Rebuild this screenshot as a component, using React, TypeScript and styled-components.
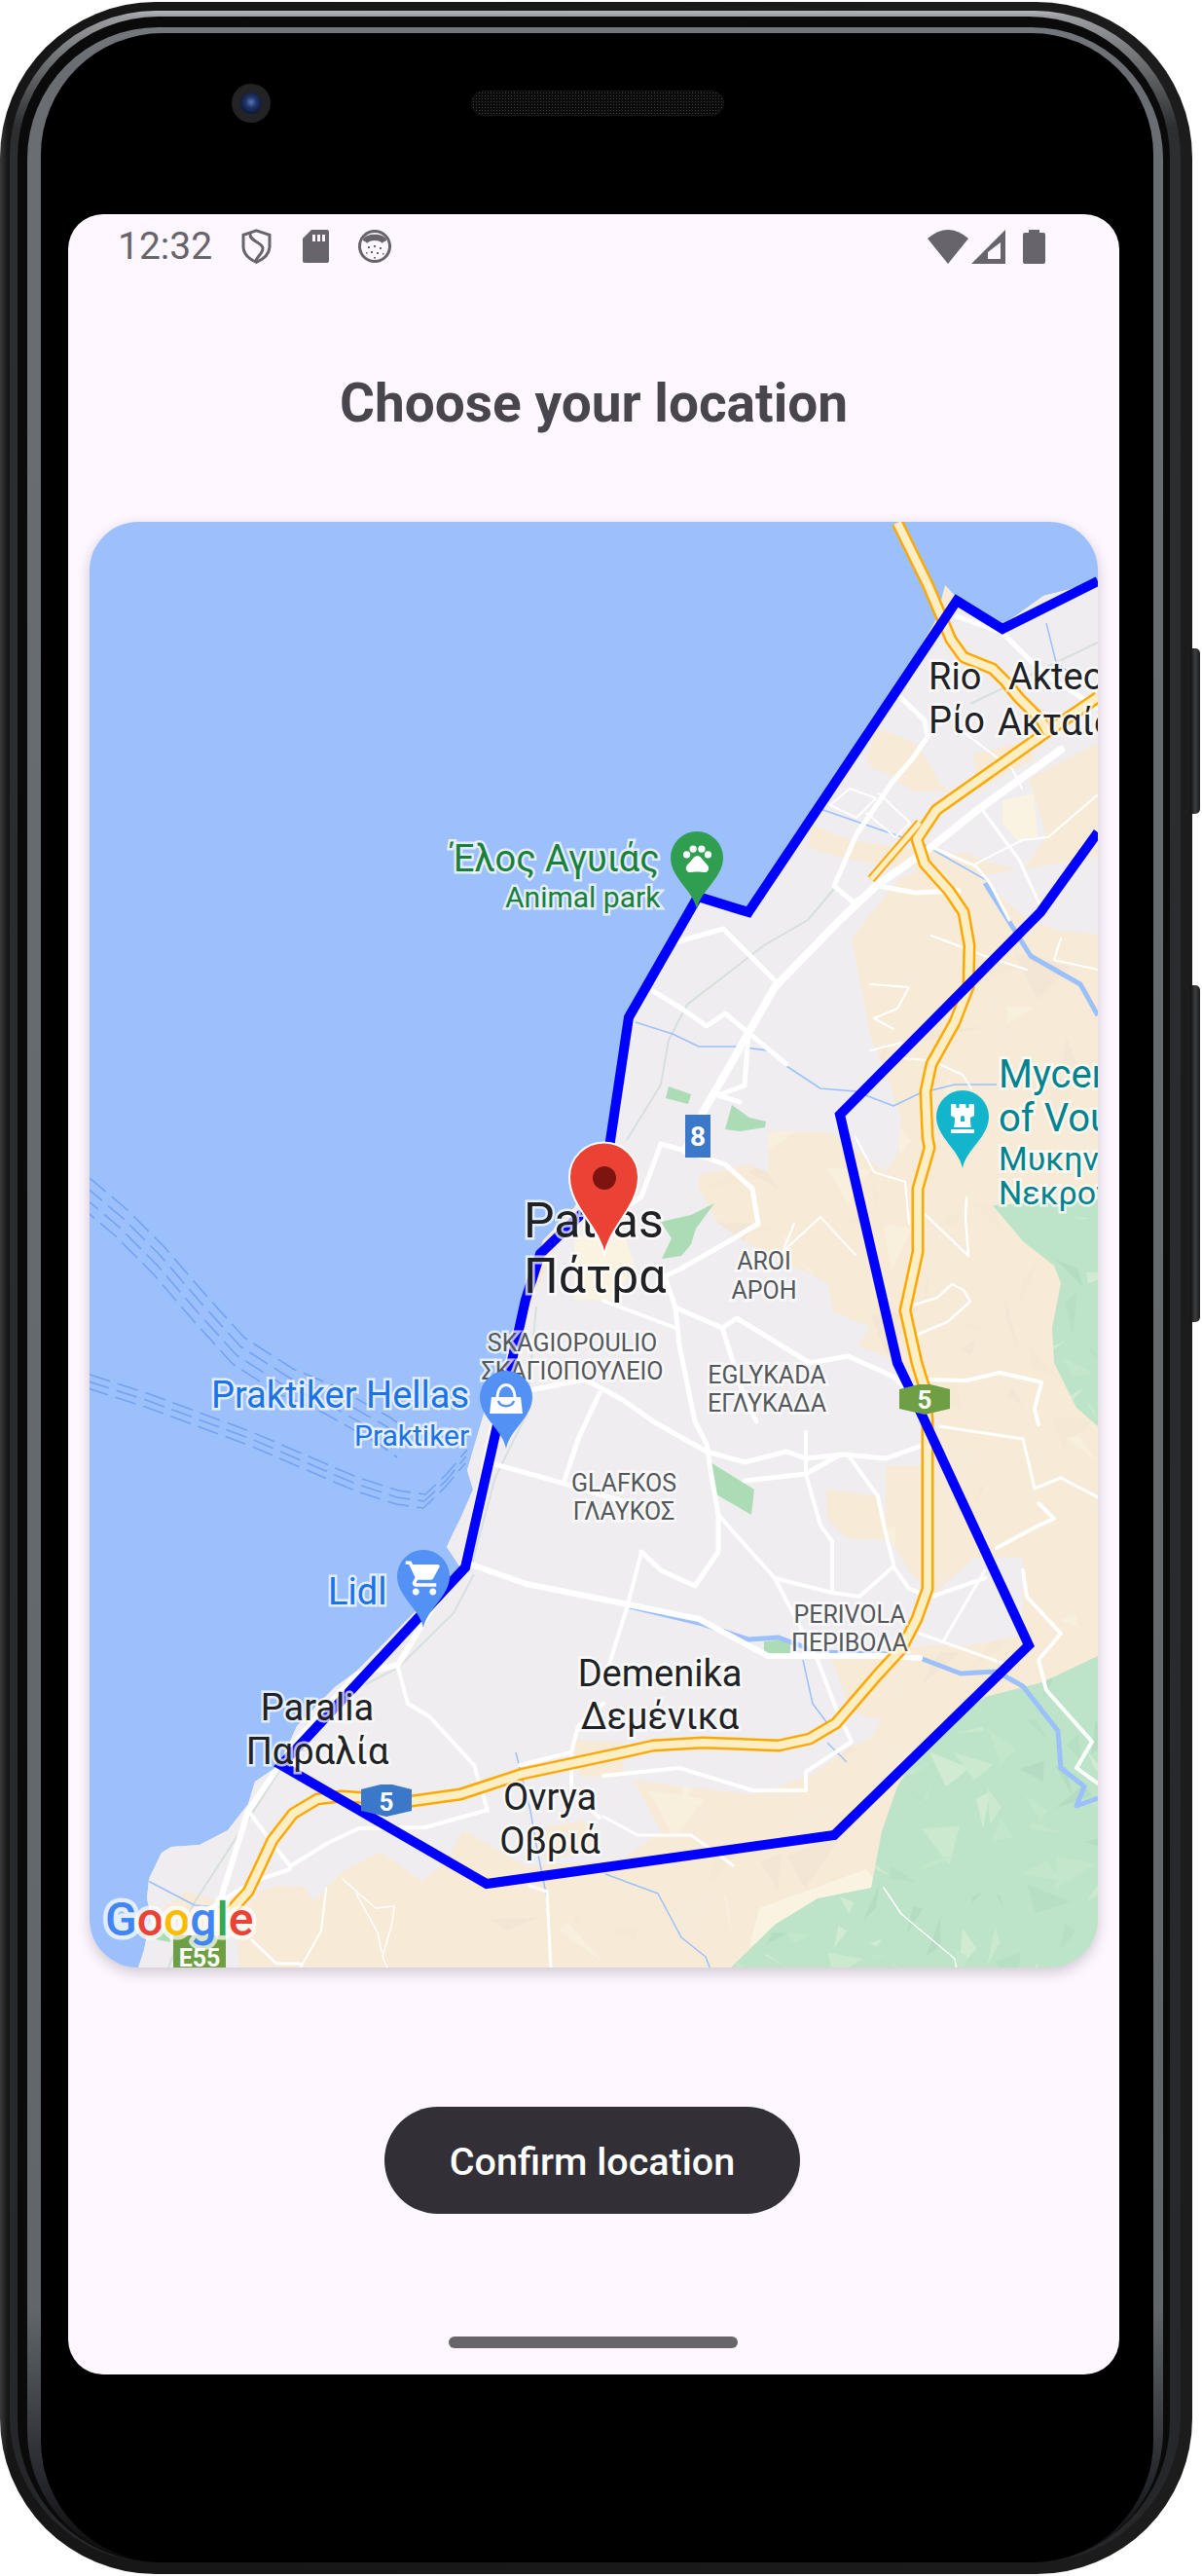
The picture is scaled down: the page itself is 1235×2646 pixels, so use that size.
import React from "react";
import styled, { createGlobalStyle } from "styled-components";
import { MdPets, MdShoppingCart } from "react-icons/md";
import { FaChessRook } from "react-icons/fa";

const GlobalStyle = createGlobalStyle`
  html, body {
    margin: 0;
    padding: 0;
    background: #fff;
    font-family: Roboto, "Noto Sans", sans-serif;
  }
`;

// all map coordinates are page pixels, the svg viewBox starts at the card corner
const LAND =
  "1128,598 1072,612 1050,628 1030,642 985,616 971,601 962,636 875,786 832,850 789,900 769,939 716,925 646,1045 632,1171 590,1240 558,1274 537,1331 523,1381 509,1446 498,1449 480,1510 486,1530 473,1560 464,1578 459,1589 473,1610 419,1663 366,1717 344,1733 305,1773 287,1813 262,1830 255,1853 234,1880 205,1895 176,1897 166,1903 153,1930 151,1950 155,1967 148,2003 142,2021 1128,2021";

const CITY =
  "440,1560 620,1180 640,1045 716,925 769,939 875,786 985,616 1128,600 1128,763 1057,800 1067,830 1075,860 1050,895 1000,880 926,900 875,964 894,1061 914,1114 926,1150 922,1186 910,1204 855,1164 789,1161 789,1204 769,1196 718,1207 718,1221 738,1257 765,1275 785,1286 851,1318 855,1346 894,1364 881,1382 926,1400 949,1440 965,1460 949,1506 910,1506 910,1575 934,1613 957,1640 1000,1600 1051,1600 1051,1680 1000,1690 957,1690 926,1694 855,1705 875,1759 906,1766 894,1786 875,1793 832,1824 777,1843 698,1835 651,1828 679,1881 640,1910 541,1917 476,1880 459,1910 434,1933 391,1902 351,1923 323,1953 312,1938 284,1937 267,1943 251,1963 226,1953 191,1943 171,1957 166,1960 244,1990 246,2030 100,2030 100,1600";

const CITY_EAST = "1005,900 1128,880 1128,960 1085,955 1050,940";

const BEIGE_PATCHES = [
  "890,780 900,747 940,763 957,787 967,807 977,813 937,813 917,797 897,790",
  "835,848 873,863 923,870 937,873 997,877 1010,887 953,913 940,890 915,890 860,880 830,870",
  "849,1529 900,1537 910,1582 870,1580 850,1560",
  "855,1705 905,1700 925,1720 895,1766 875,1755",
  "590,1787 640,1790 640,1825 595,1825",
  "540,1880 600,1870 620,1900 560,1910",
  "1000,775 1057,760 1063,780 1005,810",
];

const CREAM_PATCHES = [
  "1030,822 1062,815 1066,860 1045,864 1030,845",
  "590,1270 640,1262 652,1300 630,1335 590,1335",
  "780,1960 890,1920 910,1945 845,1955 770,2000",
];

const PARKS = [
  "687,1116 710,1124 707,1134 684,1128",
  "745,1160 752,1135 770,1148 787,1152 786,1158 760,1162",
  "679,1255 710,1248 734,1236 715,1262 710,1278 700,1290 680,1293 690,1272",
  "730,1502 775,1530 772,1556 736,1535",
  "785,1686 812,1684 812,1700 785,1700",
  "150,1990 170,1970 175,1995",
];

const FOREST_SOUTH =
  "749,2023 796,1977 840,1950 895,1939 906,1881 922,1835 953,1786 1012,1743 1071,1728 1128,1701 1128,2021";
const FOREST_NORTH =
  "1020,1238 1128,1232 1128,1465 1106,1446 1083,1400 1081,1364 1090,1318 1083,1300 1051,1275";

const RAILS = [
  "997,723 1128,660",
  "857,913 830,945 785,971 706,1032 687,1068 679,1114 644,1171",
  "551,1342 541,1453 509,1517 484,1610",
  "487,1617 466,1657 409,1713 376,1730",
  "291,1813 198,1957 173,2021",
];

const BLOCKS = [
  { w: 8, pts: "1090,770 1003,833 957,870 900,910 863,945 796,1014 769,1061 722,1143 704,1182" },
  { w: 6, pts: "484,1607 541,1627 640,1647 718,1663 789,1701 910,1701 945,1703" },
  { w: 6, pts: "541,1342 519,1417 505,1470 484,1574 476,1606 437,1663 409,1710 366,1720 305,1787 255,1860 226,1953" },
  { w: 5, pts: "983,633 1030,650 1057,677 1080,697 1128,727" },
  { w: 5, pts: "922,713 950,740 953,757 937,780 917,803 880,857 857,910 877,927 903,910 940,917 985,915" },
  { w: 3, pts: "1010,833 1047,883 1070,933" },
  { w: 3, pts: "957,870 1003,890 1017,907 1037,945" },
  { w: 2, pts: "1003,887 1050,863 1077,860 1127,817" },
  { w: 2, pts: "853,827 873,810 900,820 880,840 853,827" },
  { w: 2, pts: "903,815 935,845 920,860 890,835" },
  { w: 2, pts: "990,752 1040,790 1050,810" },
  { w: 5, pts: "694,968 743,954 800,1011" },
  { w: 5, pts: "671,1018 702,1037 726,1054 745,1041 808,1093" },
  { w: 5, pts: "769,1061 765,1115 738,1125 760,1132" },
  { w: 5, pts: "679,1175 704,1182 745,1196 773,1221 779,1257 749,1275 698,1304 683,1311 694,1343 698,1382 714,1460 726,1483 730,1510 738,1556 738,1594 714,1629 679,1613 659,1594" },
  { w: 5, pts: "679,1175 659,1229 620,1257" },
  { w: 5, pts: "694,1343 742,1364 757,1354 832,1400 871,1393 918,1414 945,1440" },
  { w: 5, pts: "742,1364 765,1436 777,1460" },
  { w: 4, pts: "620,1336 694,1364" },
  { w: 5, pts: "544,1428 601,1417 640,1438 671,1460 726,1491 765,1502 808,1491 828,1498 867,1494 910,1498 953,1483" },
  { w: 5, pts: "616,1431 594,1478 580,1521" },
  { w: 5, pts: "505,1503 580,1524 640,1542" },
  { w: 4, pts: "659,1594 644,1652 632,1690 620,1728" },
  { w: 5, pts: "765,1521 828,1514 863,1494" },
  { w: 4, pts: "828,1471 828,1514 843,1567 855,1583 855,1632" },
  { w: 4, pts: "738,1556 796,1621 855,1636 883,1640 918,1609 934,1632 957,1640 1012,1621" },
  { w: 4, pts: "871,1494 902,1537 910,1575 918,1606" },
  { w: 4, pts: "796,1621 840,1705 859,1755 875,1789 828,1820 828,1839 773,1839 698,1816 620,1824" },
  { w: 3, pts: "1012,1613 969,1686" },
  { w: 3, pts: "945,1678 1032,1709" },
  { w: 4, pts: "1051,1613 1055,1640 1090,1678 1067,1705 1075,1736 1122,1789 1106,1816 1128,1832" },
  { w: 4, pts: "1067,1544 1083,1560 1067,1567 1024,1590" },
  { w: 3, pts: "965,1465 1051,1478 1063,1529 1090,1518 1128,1538" },
  { w: 3, pts: "620,1866 655,1885 710,1885 753,1916" },
  { w: 1.5, pts: "908,1939 926,1966 981,2012 983,2023" },
  { w: 4, pts: "409,1713 419,1750 441,1763 487,1813 501,1860" },
  { w: 4, pts: "255,1860 298,1917 337,1893 369,1878 437,1877 498,1860" },
  { w: 4, pts: "216,1960 259,1933 298,1920" },
  { w: 4, pts: "534,1813 587,1800 587,1840 616,1867" },
  { w: 4, pts: "587,1800 594,1773 620,1750" },
  { w: 3, pts: "544,1937 562,1943 566,2021" },
  { w: 3, pts: "259,1993 284,2017 309,2017" },
  { w: 2, pts: "335,1940 330,1983 309,2021" },
  { w: 1.5, pts: "352,1930 386,1960 405,1958 403,1975 393,2010 398,2021" },
  { w: 1.5, pts: "366,1945 388,1985 392,2005" },
  { w: 2.5, pts: "940,1340 963,1333 978,1319 990,1325 997,1337 973,1358 940,1372" },
  { w: 2.5, pts: "950,1247 995,1290 992,1250 993,1230" },
  { w: 4, pts: "950,1417 993,1418 1027,1410 1063,1418 1070,1420 1063,1447 1067,1463" },
  { w: 2, pts: "894,1011 934,1014 922,1036 898,1046 918,1057" },
  { w: 2, pts: "894,1079 926,1071 918,1086 953,1089" },
  { w: 2, pts: "957,961 1012,982 1055,996" },
  { w: 2, pts: "1090,964 1083,986 1128,996" },
  { w: 2, pts: "965,1093 989,1104 998,1118" },
  { w: 2, pts: "879,1168 898,1204 930,1214 934,1257" },
  { w: 2, pts: "816,1257 804,1286 843,1250 879,1289" },
];

const STREAMS = [
  { w: 1.5, pts: "653,1050 691,1062 718,1075 757,1075 789,1079 808,1095 843,1118 879,1121 918,1136 945,1123 981,1114 1024,1114" },
  { w: 5, pts: "1012,907 1059,982 1110,1011 1128,1043" },
  { w: 5, pts: "647,1650 718,1667 769,1684 800,1682 840,1697 910,1699 945,1703 987,1719 1024,1717 1051,1732 1087,1778 1090,1816 1114,1835 1106,1855 1128,1847" },
  { w: 1.5, pts: "825,1705 835,1750 850,1770" },
  { w: 1.5, pts: "850,1790 870,1810" },
  { w: 1.5, pts: "530,1800 545,1860 550,1890 562,1950" },
  { w: 1.5, pts: "622,1925 676,1945 700,1990 725,2010 730,2023" },
  { w: 1.5, pts: "152,1932 200,1957 240,1960" },
  { w: 1.5, pts: "840,830 950,868 1015,905" },
  { w: 1.5, pts: "1075,640 1085,680 1110,700" },
];

const HIGHWAY =
  "237,1963 255,1943 266,1920 280,1890 301,1863 326,1848 351,1845 423,1850 473,1843 537,1822 640,1800 671,1793 722,1790 800,1793 832,1786 859,1770 902,1720 926,1694 942,1663 953,1632 953,1460 951,1429 942,1400 930,1346 943,1286 943,1221 955,1179 953,1168 951,1121 957,1093 981,1050 995,1014 996,971 990,937 975,915 950,887 942,862 962,832 1071,755 1128,716";
const HIGHWAY_NORTH =
  "922,537 953,600 967,633 977,657 990,675 1020,687 1033,700 1047,717 1070,740 1077,753";
const HIGHWAY_EXIT = "945,845 895,903";

const BOUNDARY_A =
  "1128,597 1030,646 983,617 769,937 717,921 646,1045 627,1172 620,1225 555,1288 540,1335 478,1610 289,1813 500,1935 857,1885 1057,1690 934,1425 922,1400 863,1145 1069,937 1128,855";

const FERRY_NORTH = "92,1210 130,1242 169,1281 212,1331 251,1374 301,1406 344,1424 401,1456 420,1470";
const FERRY_SOUTH = "92,1412 151,1431 259,1471 366,1517 409,1531 437,1535 459,1514 480,1489";

const LABELS: [string, number, number, number, string, "start" | "middle"][] = [
  ["Patras", 538, 1271, 50, "#202124", "start"],
  ["Πάτρα", 538, 1328, 50, "#202124", "start"],
  ["Rio", 954, 708, 38, "#202124", "start"],
  ["Ρίο", 954, 753, 38, "#202124", "start"],
  ["Akteo", 1036, 708, 38, "#202124", "start"],
  ["Ακταίο", 1025, 755, 38, "#202124", "start"],
  ["Paralia", 326, 1767, 38, "#202124", "middle"],
  ["Παραλία", 326, 1812, 38, "#202124", "middle"],
  ["Demenika", 678, 1732, 38, "#202124", "middle"],
  ["Δεμένικα", 678, 1776, 38, "#202124", "middle"],
  ["Ovrya", 565, 1859, 38, "#202124", "middle"],
  ["Οβριά", 565, 1904, 38, "#202124", "middle"],
  ["AROI", 785, 1304, 25, "#54575c", "middle"],
  ["ΑΡΟΗ", 785, 1334, 25, "#54575c", "middle"],
  ["SKAGIOPOULIO", 588, 1388, 25, "#54575c", "middle"],
  ["ΣΚΑΓΙΟΠΟΥΛΕΙΟ", 588, 1417, 25, "#54575c", "middle"],
  ["EGLYKADA", 788, 1421, 25, "#54575c", "middle"],
  ["ΕΓΛΥΚΑΔΑ", 788, 1450, 25, "#54575c", "middle"],
  ["GLAFKOS", 641, 1532, 25, "#54575c", "middle"],
  ["ΓΛΑΥΚΟΣ", 641, 1561, 25, "#54575c", "middle"],
  ["PERIVOLA", 873, 1667, 25, "#54575c", "middle"],
  ["ΠΕΡΙΒΟΛΑ", 873, 1696, 25, "#54575c", "middle"],
  ["Έλος Αγυιάς", 464, 895, 38, "#188038", "start"],
  ["Animal park", 519, 932, 30, "#188038", "start"],
  ["Mycenaean", 1026, 1117, 40, "#00838f", "start"],
  ["of Voudeni", 1026, 1162, 40, "#00838f", "start"],
  ["Μυκηναϊκό", 1026, 1202, 34, "#00838f", "start"],
  ["Νεκροταφείο", 1026, 1237, 34, "#00838f", "start"],
  ["Praktiker Hellas", 217, 1446, 38, "#1a73e8", "start"],
  ["Praktiker", 364, 1485, 30, "#1a73e8", "start"],
  ["Lidl", 337, 1648, 38, "#1a73e8", "start"],
];

const SHADE_COLORS = {
  forest: ["#cbe9ce", "#b6dfc4", "#d0ebd1", "#b3dcc2", "#c4e6cb"],
  plain: ["#f5e9d6", "#f9efdd", "#f3e6d5", "#f6ead9"],
};

// low poly relief, same seed every render so the picture stays put
const makeShades = (seed: number, x0: number, y0: number, x1: number, y1: number, step: number, colors: string[]) => {
  let s = seed;
  const rnd = () => {
    s = (s * 16807) % 2147483647;
    return s / 2147483647;
  };
  const out: { points: string; fill: string }[] = [];
  for (let y = y0; y < y1; y += step) {
    for (let x = x0; x < x1; x += step) {
      if (rnd() < 0.35) continue;
      const a = `${x + rnd() * step},${y + rnd() * step}`;
      const b = `${x + rnd() * step * 1.6},${y + rnd() * step}`;
      const c = `${x + rnd() * step},${y + rnd() * step * 1.6}`;
      out.push({ points: `${a} ${b} ${c}`, fill: colors[Math.floor(rnd() * colors.length)] });
    }
  }
  return out;
};

const FOREST_SHADES = makeShades(4711, 740, 1220, 1130, 2025, 34, SHADE_COLORS.forest);
const PLAIN_SHADES = makeShades(1291, 480, 960, 1130, 2025, 46, SHADE_COLORS.plain);

const Page = styled.div`
  position: relative;
  width: 1235px;
  height: 2646px;
  overflow: hidden;
  background: #fff;
`;

const Shell = styled.div`
  position: relative;
  box-sizing: border-box;
  width: 1225px;
  height: 2642px;
  margin-top: 2px;
  padding: 9px 12px 12px 10px;
  border-radius: 160px;
  background: linear-gradient(90deg, #3a3a3b 0, #161616 8px, #1c1c1d 100%);
`;

const Rim = styled.div`
  box-sizing: border-box;
  height: 100%;
  padding: 6px 11px 0 8px;
  border-radius: 150px;
  background: linear-gradient(180deg, #b4b6b9 0, #9b9da0 6px, #2d2e30 120px, #26272a 100%);
`;

const Gutter = styled.div`
  box-sizing: border-box;
  height: 100%;
  padding: 11px 7px 0 10px;
  border-radius: 145px;
  background: #0a0a0a;
`;

const Bevel = styled.div`
  box-sizing: border-box;
  height: 100%;
  padding: 6px 10px 0 14px;
  border-radius: 135px;
  background: linear-gradient(180deg, #74777b 0, #6a6d72 40px, #62666b 90%, #24252a 97%, #0a0a0a 100%);
`;

const Bezel = styled.div`
  box-sizing: border-box;
  height: 100%;
  padding: 0 35px 0 28px;
  border-radius: 125px;
  background: #000;
`;

const SensorRow = styled.div`
  box-sizing: border-box;
  display: flex;
  align-items: center;
  gap: 206px;
  height: 186px;
  padding: 0 0 42px 168px;
`;

const Camera = styled.div`
  display: flex;
  align-items: center;
  justify-content: center;
  width: 40px;
  height: 40px;
  border-radius: 50%;
  background: #232325;
`;

const Lens = styled.div`
  width: 22px;
  height: 22px;
  border-radius: 50%;
  background: radial-gradient(circle at 50% 45%, #5a76b8 0, #1e3468 35%, #10193a 70%, #0a0d18 100%);
`;

const Speaker = styled.div`
  width: 260px;
  height: 26px;
  border-radius: 13px;
  border: 1px solid #161616;
  background-color: #0b0b0b;
  background-image: radial-gradient(#3c3c3c 0.9px, transparent 1px);
  background-size: 3px 3px;
  box-sizing: border-box;
`;

const SideKey = styled.div<{ $top: number; $height: number }>`
  position: absolute;
  left: 1223px;
  top: ${(p) => p.$top}px;
  width: 10px;
  height: ${(p) => p.$height}px;
  border-radius: 0 5px 5px 0;
  background: linear-gradient(90deg, #111 0, #3d3e40 50%, #1c1c1c 100%);
`;

const Screen = styled.div`
  display: flex;
  flex-direction: column;
  align-items: center;
  height: 2219px;
  border-radius: 36px;
  overflow: hidden;
  background: #fef7ff;
`;

const StatusBar = styled.div`
  box-sizing: border-box;
  display: flex;
  align-items: center;
  width: 100%;
  height: 66px;
  padding: 0 76px 0 51px;
  color: #67646b;
`;

const Clock = styled.span`
  font-size: 39px;
  font-weight: 400;
  line-height: 1;
  margin-right: 30px;
`;

const StatusIcon = styled.svg<{ $gap?: number }>`
  display: block;
  margin-right: ${(p) => p.$gap ?? 0}px;
  fill: currentColor;
`;

const Spacer = styled.div`
  flex: 1;
`;

const Title = styled.h1`
  margin: 97px 0 0;
  font-size: 55px;
  line-height: 62px;
  font-weight: 700;
  color: #49454e;
`;

const MapCard = styled.div`
  width: 1036px;
  height: 1485px;
  margin-top: 91px;
  flex-shrink: 0;
  border-radius: 50px;
  overflow: hidden;
  background: #9cc0fc;
  box-shadow: 0 5px 14px rgba(40, 30, 50, 0.22);
`;

const MapSvg = styled.svg`
  display: block;
  width: 100%;
  height: 100%;
`;

const Road = styled.polyline<{ $w: number }>`
  fill: none;
  stroke: #fff;
  stroke-width: ${(p) => p.$w};
  stroke-linejoin: round;
  stroke-linecap: round;
`;

const Rail = styled.polyline`
  fill: none;
  stroke: #d7dfdb;
  stroke-width: 2;
`;

const Stream = styled.polyline<{ $w: number }>`
  fill: none;
  stroke: #9cc0fc;
  stroke-width: ${(p) => p.$w};
  stroke-linejoin: round;
`;

const FerryRoute = styled.polyline`
  fill: none;
  stroke: #74a2f2;
  stroke-width: 1.6;
  stroke-dasharray: 22 8;
`;

const HighwayEdge = styled.polyline<{ $thin?: boolean }>`
  fill: none;
  stroke: #ffa800;
  stroke-width: ${(p) => (p.$thin ? 9 : 13)};
  stroke-linejoin: round;
`;

const HighwayFill = styled.polyline<{ $thin?: boolean }>`
  fill: none;
  stroke: #fdeec6;
  stroke-width: ${(p) => (p.$thin ? 5 : 8)};
  stroke-linejoin: round;
`;

const BoundaryLine = styled.polyline`
  fill: none;
  stroke: #0000ff;
  stroke-width: 10;
  stroke-linejoin: miter;
`;

const MapLabel = styled.text<{ $size: number; $color: string }>`
  font-family: Roboto, sans-serif;
  font-size: ${(p) => p.$size}px;
  fill: ${(p) => p.$color};
  paint-order: stroke;
  stroke: rgba(255, 255, 255, 0.72);
  stroke-width: 5px;
  stroke-linejoin: miter;
`;

const ShieldLabel = styled.text<{ $size: number }>`
  font-family: Roboto, sans-serif;
  font-size: ${(p) => p.$size}px;
  font-weight: 700;
  fill: #fff;
  text-anchor: middle;
`;

const GoogleMark = styled.text`
  font-family: Roboto, sans-serif;
  font-size: 48px;
  font-weight: 500;
  paint-order: stroke;
  stroke: rgba(255, 255, 255, 0.72);
  stroke-width: 9px;
  stroke-linejoin: round;
`;

const ConfirmButton = styled.button`
  flex-shrink: 0;
  width: 427px;
  height: 110px;
  margin: 143px 3px 0 0;
  padding: 3px 0 0;
  border: 0;
  border-radius: 55px;
  background: #322f37;
  color: #fff;
  font-family: Roboto, sans-serif;
  font-size: 39.500px;
  font-weight: 500;
`;

const HomePill = styled.div`
  flex-shrink: 0;
  width: 297px;
  height: 12px;
  margin: 126px 2px 0 0;
  border-radius: 6px;
  background: #67646a;
`;

const Pin = ({ x, y, fill }: { x: number; y: number; fill: string }) => (
  <path
    fill={fill}
    d={`M${x} ${y}C${x - 4} ${y - 20} ${x - 27} ${y - 32} ${x - 27} ${y - 53}A27 27 0 1 1 ${x + 27} ${y - 53}C${x + 27} ${y - 32} ${x + 4} ${y - 20} ${x} ${y}Z`}
  />
);

const BoundaryMap = () => (
  <MapSvg viewBox="92 536 1036 1485">
    <defs>
      <clipPath id="land-clip">
        <polygon points={LAND} />
      </clipPath>
      <clipPath id="forest-clip">
        <polygon points={FOREST_SOUTH} />
        <polygon points={FOREST_NORTH} />
      </clipPath>
    </defs>

    {[0, 1, 2, 3].map((i) => (
      <FerryRoute key={i} points={FERRY_NORTH} transform={`translate(${-i * 4} ${i * 9})`} />
    ))}
    {[0, 1, 2].map((i) => (
      <FerryRoute key={i} points={FERRY_SOUTH} transform={`translate(${-i} ${i * 7})`} />
    ))}

    <g clipPath="url(#land-clip)">
      <rect x="92" y="536" width="1036" height="1485" fill="#f7ebd7" />
      {PLAIN_SHADES.map((s, i) => (
        <polygon key={i} points={s.points} fill={s.fill} />
      ))}
      <polygon points={CITY} fill="#efedf0" />
      <polygon points={CITY_EAST} fill="#efedf0" />
      {BEIGE_PATCHES.map((p) => (
        <polygon key={p} points={p} fill="#f7ebd7" />
      ))}
      {CREAM_PATCHES.map((p) => (
        <polygon key={p} points={p} fill="#fbf3e2" />
      ))}
      <polygon points={FOREST_SOUTH} fill="#bde4c8" />
      <polygon points={FOREST_NORTH} fill="#bde4c8" />
      <g clipPath="url(#forest-clip)">
        {FOREST_SHADES.map((s, i) => (
          <polygon key={i} points={s.points} fill={s.fill} />
        ))}
      </g>
      {PARKS.map((p) => (
        <polygon key={p} points={p} fill="#acdcb5" />
      ))}
      {RAILS.map((r) => (
        <Rail key={r} points={r} />
      ))}
      {STREAMS.map((s) => (
        <Stream key={s.pts} points={s.pts} $w={s.w} />
      ))}
      {BLOCKS.map((r) => (
        <Road key={r.pts} points={r.pts} $w={r.w} />
      ))}
      <HighwayEdge points={HIGHWAY} />
      <HighwayEdge points={HIGHWAY_EXIT} $thin />
      <HighwayFill points={HIGHWAY} />
      <HighwayFill points={HIGHWAY_EXIT} $thin />
    </g>
    <HighwayEdge points={HIGHWAY_NORTH} />
    <HighwayFill points={HIGHWAY_NORTH} />

    <BoundaryLine points={BOUNDARY_A} />

    <rect x="704" y="1145" width="26" height="44" fill="#3b78c9" />
    <ShieldLabel x="717" y="1177" $size={28}>8</ShieldLabel>
    <polygon points="924,1427 944,1422 956,1422 976,1427 976,1447 950,1453 924,1447" fill="#6f9f45" />
    <ShieldLabel x="950" y="1447" $size={26}>5</ShieldLabel>
    <polygon points="371,1838 391,1833 403,1833 423,1838 423,1860 397,1866 371,1860" fill="#3b78c9" />
    <ShieldLabel x="397" y="1860" $size={26}>5</ShieldLabel>
    <rect x="178" y="1988" width="54" height="36" fill="#6f9f45" />
    <ShieldLabel x="205" y="2020" $size={25}>E55</ShieldLabel>

    {LABELS.map(([text, x, y, size, color, anchor]) => (
      <MapLabel key={text} x={x} y={y} $size={size} $color={color} textAnchor={anchor}>
        {text}
      </MapLabel>
    ))}

    <Pin x={716} y={934} fill="#2f9e50" />
    <MdPets x={699} y={864} size={35} color="#fff" />
    <Pin x={989} y={1200} fill="#12b5cb" />
    <FaChessRook x={973} y={1132} size={32} color="#fff" />
    <Pin x={520} y={1488} fill="#5491f5" />
    <path d="M511 1436C511 1418 529 1418 529 1436" fill="none" stroke="#fff" strokeWidth="3" />
    <path d="M505 1435H535L537 1452H503Z" fill="#fff" />
    <path d="M512 1439C514 1446 526 1446 528 1439" fill="none" stroke="#5491f5" strokeWidth="2.5" />
    <Pin x={435} y={1672} fill="#5491f5" />
    <MdShoppingCart x={415} y={1600} size={42} color="#fff" />

    <path
      d="M621 1289C615 1258 585 1240 585 1209A35.500 35.500 0 1 1 656 1209C656 1240 627 1258 621 1289Z"
      fill="#ea4335"
      stroke="#fff"
      strokeWidth="2"
    />
    <circle cx="621" cy="1210" r="12" fill="#7e140f" />

    <GoogleMark x="108" y="1988">
      <tspan fill="#4285f4">G</tspan>
      <tspan fill="#ea4335">o</tspan>
      <tspan fill="#fbbc05">o</tspan>
      <tspan fill="#4285f4">g</tspan>
      <tspan fill="#34a853">l</tspan>
      <tspan fill="#ea4335">e</tspan>
    </GoogleMark>
  </MapSvg>
);

const App: React.FC = () => {
  return (
    <Page>
      <GlobalStyle />
      <Shell>
        <Rim>
          <Gutter>
            <Bevel>
              <Bezel>
                <SensorRow>
                  <Camera>
                    <Lens />
                  </Camera>
                  <Speaker />
                </SensorRow>
                <Screen>
                  <StatusBar>
                    <Clock>12:32</Clock>
                    <StatusIcon width="31" height="36" viewBox="0 0 31 36" $gap={32}>
                      <path
                        d="M15.500 1.800 29 6.300V18C29 26 22 31.500 15.500 34.300 9 31.500 2 26 2 18V6.300Z"
                        fill="none"
                        stroke="currentColor"
                        strokeWidth="3"
                      />
                      <path
                        d="M9 5C8 13 22 14 22 20 22 26 16 28 15 33"
                        fill="none"
                        stroke="currentColor"
                        strokeWidth="3"
                      />
                    </StatusIcon>
                    <StatusIcon width="27" height="34" viewBox="0 0 27 34" $gap={30}>
                      <path d="M9 0H25A2 2 0 0 1 27 2V32A2 2 0 0 1 25 34H2A2 2 0 0 1 0 32V9Z" />
                      <path d="M10 5h3v7h-3zM15 5h3v7h-3zM20 5h3v7h-3z" fill="#fef7ff" />
                    </StatusIcon>
                    <StatusIcon width="34" height="34" viewBox="0 0 34 34">
                      <circle cx="17" cy="17" r="15.500" fill="none" stroke="currentColor" strokeWidth="3" />
                      <path d="M5 10C8 3 26 3 29 10 29 13 26 11 25 14 22 10 12 10 9 14 8 11 5 13 5 10Z" />
                      <path d="M10 17h2v2h-2zM16 16h2v2h-2zM22 18h2v2h-2zM13 22h2v2h-2zM19 23h2v2h-2zM8 23h1.500v1.500H8zM25 24h1.500v1.500H25zM16 28h2v1.500h-2z" />
                    </StatusIcon>
                    <Spacer />
                    <StatusIcon width="42" height="35" viewBox="0 0 42 35" $gap={3}>
                      <path d="M0 9Q21 -9 42 9L21 35Z" />
                    </StatusIcon>
                    <StatusIcon width="35" height="35" viewBox="0 0 35 35" $gap={18}>
                      <path fillRule="evenodd" d="M0 35 35 0V35ZM17 30H30V13L17 23Z" />
                    </StatusIcon>
                    <StatusIcon width="23" height="35" viewBox="0 0 23 35">
                      <path d="M6 0H17V3H21A2 2 0 0 1 23 5V33A2 2 0 0 1 21 35H2A2 2 0 0 1 0 33V5A2 2 0 0 1 2 3H6Z" />
                    </StatusIcon>
                  </StatusBar>
                  <Title>Choose your location</Title>
                  <MapCard>
                    <BoundaryMap />
                  </MapCard>
                  <ConfirmButton>Confirm location</ConfirmButton>
                  <HomePill />
                </Screen>
              </Bezel>
            </Bevel>
          </Gutter>
        </Rim>
      </Shell>
      <SideKey $top={666} $height={170} />
      <SideKey $top={1012} $height={346} />
    </Page>
  );
};

export default App;
